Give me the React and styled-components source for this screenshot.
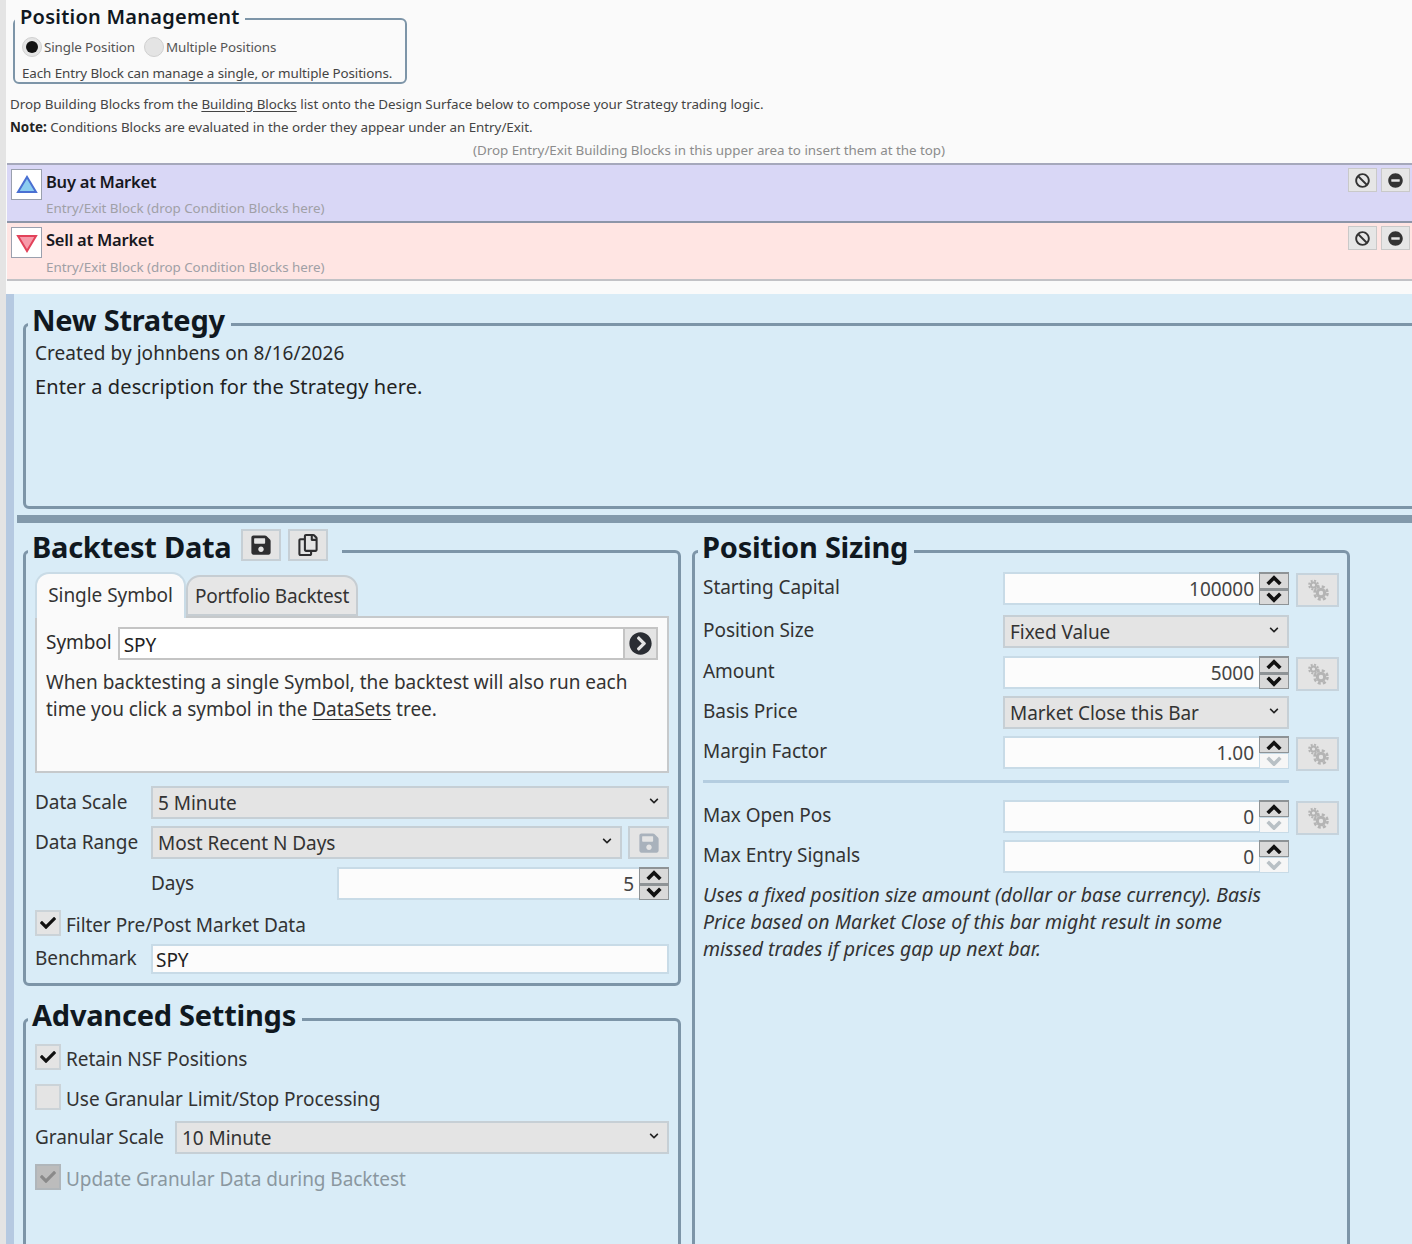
import { Fragment } from "react";
import styled, { createGlobalStyle } from "styled-components";
import {
  FaBan,
  FaCheck,
  FaChevronCircleRight,
  FaChevronDown,
  FaMinusCircle,
  FaRegCopy,
  FaSave,
} from "react-icons/fa";

const GlobalStyle = createGlobalStyle`
  html, body {
    margin: 0;
    padding: 0;
    background: #e4e4e4;
  }
  * {
    box-sizing: border-box;
  }
  body {
    font-family: "Noto Sans", "Open Sans", sans-serif;
    color: #2b2b2b;
  }
`;

const Page = styled.div`
  display: flex;
  width: 1412px;
  height: 1244px;
  overflow: hidden;
  background: #e4e4e4;
`;

const Main = styled.div`
  flex: 1;
  margin-left: 6px;
  min-width: 0;
`;

const TopPanel = styled.div`
  height: 294px;
  background: #fafafa;
  overflow: hidden;
`;

const Frame = styled.fieldset`
  margin: 0;
  padding: 0;
  min-width: 0;
  border: 3px solid #7d95a8;
  border-radius: 6px;
`;

const FrameTitle = styled.legend`
  display: flex;
  align-items: center;
  padding: 0 6px 9px 4px;
  margin-left: -7px;
  height: 34px;
  font-size: 29px;
  font-weight: 700;
  letter-spacing: -0.25px;
  color: #10181f;
  white-space: nowrap;
`;

const SizingTitle = styled(FrameTitle)`
  margin-left: -5px;
`;

const PositionFrame = styled(Frame)`
  width: 394px;
  height: 78px;
  margin: 6px 0 0 7px;
  border-width: 2px;
  padding: 0 7px;
`;

const PositionTitle = styled(FrameTitle)`
  height: 26px;
  margin-left: -7px;
  padding: 0 5px 6px 5px;
  font-size: 20px;
  font-weight: 600;
  letter-spacing: 0.25px;
`;

const RadioRow = styled.div`
  display: flex;
  align-items: center;
  height: 24px;
  margin-top: 3px;
  font-size: 13.4px;
  letter-spacing: -0.1px;
  color: #555;
`;

const RadioDot = styled.span`
  display: flex;
  align-items: center;
  justify-content: center;
  width: 20px;
  height: 20px;
  margin-right: 2px;
  border-radius: 50%;
  background: #e4e4e4;
  border: 1px solid #d0d0d0;
  &::after {
    content: "";
    width: 12px;
    height: 12px;
    border-radius: 50%;
    background: ${(p) => (p.$on ? "#111" : "transparent")};
  }
`;

const RadioLabel = styled.span`
  margin-right: 9px;
`;

const SmallNote = styled.div`
  margin-top: 4px;
  font-size: 13.4px;
  line-height: 20px;
  letter-spacing: -0.1px;
  color: #444;
`;

const HelpLine = styled.div`
  padding-left: 4px;
  font-size: 13.4px;
  line-height: 23px;
  letter-spacing: -0.03px;
  color: #444;
  u {
    text-underline-offset: 2px;
  }
  b {
    color: #222;
  }
`;

const HelpLines = styled.div`
  margin-top: 9px;
`;

const DropHint = styled.div`
  margin: 0 0 1px;
  text-align: center;
  font-size: 13.4px;
  line-height: 23px;
  letter-spacing: -0.03px;
  color: #8c8c8c;
`;

const Block = styled.div`
  display: flex;
  height: ${(p) => (p.$sell ? "60px" : "58px")};
  margin-left: 1px;
  padding: 3px 2px 0 4px;
  background: ${(p) => (p.$sell ? "#ffe5e3" : "#d9d7f6")};
  border-top: 2px solid ${(p) => (p.$sell ? "#8d95a8" : "#a5a8bb")};
  border-bottom: ${(p) => (p.$sell ? "2px solid #c2c2c6" : "0")};
`;

const BlockIcon = styled.div`
  display: flex;
  align-items: center;
  justify-content: center;
  width: 31px;
  height: 31px;
  margin-top: 1px;
  background: #fff;
  border: 1px solid #9aa0ae;
`;

const BlockText = styled.div`
  flex: 1;
  margin-left: 4px;
  padding-top: 2px;
`;

const BlockTitle = styled.div`
  font-size: 16.5px;
  line-height: 24px;
  font-weight: 600;
  letter-spacing: -0.25px;
  color: #17171d;
`;

const BlockSub = styled.div`
  margin-top: ${(p) => (p.$sell ? "5px" : "4px")};
  font-size: 13.4px;
  line-height: 20px;
  letter-spacing: -0.03px;
  color: #a0a0a6;
`;

const BlockButtons = styled.div`
  display: flex;
  gap: 4px;
`;

const BlockButton = styled.div`
  display: flex;
  align-items: center;
  justify-content: center;
  width: 29px;
  height: 24px;
  background: #e6e6e6;
  border: 1px solid #c9c9c9;
  color: #333;
  font-size: 15px;
`;

const StrategyPanel = styled.div`
  height: 950px;
  padding: 13px 0 0 9px;
  background: #d9ecf7;
  border-left: 8px solid #b5c9e1;
`;

const StrategyFrame = styled(Frame)`
  width: 1420px;
  height: 202px;
  padding: 0 9px;
`;

const Created = styled.div`
  margin-top: -2px;
  font-size: 19px;
  line-height: 28px;
  letter-spacing: 0.06px;
`;

const Description = styled.div`
  margin-top: 6px;
  font-size: 20px;
  line-height: 28px;
  letter-spacing: 0.12px;
  color: #222;
`;

const Splitter = styled.div`
  height: 8px;
  margin: 6px 0 0 -6px;
  background: #8299ab;
`;

const Columns = styled.div`
  display: grid;
  grid-template-columns: 658px 658px;
  column-gap: 11px;
  margin-top: 11px;
  height: 740px;
`;

const LeftColumn = styled.div`
  display: flex;
  flex-direction: column;
  gap: 16px;
`;

const BacktestFrame = styled(Frame)`
  height: 452px;
  padding: 0 9px;
`;

const AdvancedFrame = styled(Frame)`
  height: 300px;
  padding: 0 9px;
`;

const SizingFrame = styled(Frame)`
  height: 740px;
  padding: 0 8px;
`;

const TitleButtons = styled.div`
  display: flex;
  gap: 7px;
  margin: 0 8px 3px 9px;
`;

const ToolButton = styled.div`
  display: flex;
  align-items: center;
  justify-content: center;
  width: 40px;
  height: 32px;
  background: #e4e4e4;
  border: 2px solid #c6cfd5;
  color: ${(p) => (p.$off ? "#a9b2bc" : "#2e2e30")};
  font-size: 22px;
`;

const RangeSaveButton = styled(ToolButton)`
  width: 41px;
  height: 33px;
  margin-left: 6px;
`;

const Tabs = styled.div`
  display: flex;
  align-items: flex-end;
  height: 44px;
  margin-top: 4px;
`;

const Tab = styled.div`
  display: flex;
  align-items: center;
  justify-content: center;
  height: ${(p) => (p.$active ? "46px" : "41px")};
  width: ${(p) => (p.$active ? "151px" : "172px")};
  margin-bottom: ${(p) => (p.$active ? "-2px" : "0")};
  padding: ${(p) => (p.$active ? "0 0 3px" : "1px 0 0")};
  position: relative;
  font-size: 19px;
  letter-spacing: ${(p) => (p.$active ? "-0.05px" : "-0.2px")};
  color: #333;
  background: ${(p) => (p.$active ? "#fafafa" : "#e6e6e6")};
  border: 2px solid ${(p) => (p.$active ? "#c9dbe6" : "#c6cdd2")};
  border-bottom: ${(p) => (p.$active ? "0" : "2px solid #c6cdd2")};
  border-radius: 14px 14px 0 0;
`;

const TabPanel = styled.div`
  height: 157px;
  padding: 9px 9px 0 9px;
  background: #fafafa;
  border: 2px solid #c6c9cb;
`;

const SymbolRow = styled.div`
  display: flex;
  align-items: center;
  height: 33px;
  font-size: 19px;
  letter-spacing: -0.05px;
`;

const SymbolLabel = styled.span`
  margin-top: -3px;
`;

const SymbolInput = styled.div`
  flex: 1;
  display: flex;
  align-items: center;
  height: 33px;
  margin-left: 6px;
  padding: 2px 0 0 4px;
  background: #fff;
  border: 2px solid #c4c4c4;
  color: #222;
`;

const GoButton = styled.div`
  display: flex;
  align-items: center;
  justify-content: center;
  width: 33px;
  height: 33px;
  background: #e4e4e4;
  border: 2px solid #c4c4c4;
  border-left: 0;
  color: #2a2d33;
  font-size: 23px;
`;

const Paragraph = styled.div`
  margin-top: 9px;
  font-size: 19px;
  line-height: 27px;
  letter-spacing: -0.03px;
  color: #333;
  u {
    text-underline-offset: 3px;
  }
`;

const FormRow = styled.div`
  display: grid;
  grid-template-columns: ${(p) => p.$columns};
  align-items: center;
  margin-top: ${(p) => p.$top};
`;

const Label = styled.div`
  font-size: 19px;
  line-height: 28px;
  letter-spacing: -0.05px;
  color: #333;
  margin-top: -2px;
`;

const SelectBox = styled.div`
  display: flex;
  align-items: center;
  justify-content: space-between;
  height: 33px;
  padding: 1px 8px 0 5px;
  background: #e4e4e4;
  border: 2px solid #c6cfd5;
  font-size: 19px;
  letter-spacing: -0.05px;
  color: #333;
  svg {
    font-size: 10px;
    color: #222;
    margin-top: -4px;
  }
`;

const Field = styled.div`
  display: flex;
  height: ${(p) => p.$height || "33px"};
  background: #fcfcfc;
  border: 2px solid #c8dbe7;
  font-size: 19px;
  letter-spacing: -0.05px;
  color: ${(p) => (p.$dark ? "#222" : "#444")};
`;

const FieldText = styled.div`
  flex: 1;
  display: flex;
  align-items: center;
  justify-content: ${(p) => (p.$left ? "flex-start" : "flex-end")};
  padding: 1px 5px 0 3px;
`;

const SpinnerWrap = styled.div`
  display: flex;
  flex-direction: column;
  width: 30px;
  margin: -2px -2px -2px 0;
`;

const SpinnerButton = styled.div`
  flex: 1;
  display: flex;
  align-items: center;
  justify-content: center;
  background: ${(p) => (p.$off ? "#f6f6f6" : "#d9d9d9")};
  border: 1px solid ${(p) => (p.$off ? "#c8dbe7" : "#8e9396")};
  border-top-width: ${(p) => (p.$off ? "1px" : "2px")};
  color: ${(p) => (p.$off ? "#b8c0c5" : "#111")};
`;

const GearButton = styled.div`
  display: flex;
  align-items: center;
  justify-content: center;
  width: 43px;
  height: 34px;
  background: #e4e4e4;
  border: 2px solid #c6d3dc;
  color: #b4b4b4;
`;

const CheckRow = styled.div`
  display: flex;
  align-items: center;
  gap: 5px;
  height: 26px;
  margin-top: ${(p) => p.$top};
  font-size: 19px;
  letter-spacing: -0.05px;
  color: ${(p) => (p.$off ? "#8a979f" : "#333")};
`;

const CheckText = styled.span`
  padding-top: 3px;
`;

const CheckBox = styled.div`
  display: flex;
  align-items: center;
  justify-content: center;
  width: 26px;
  height: 26px;
  background: ${(p) => (p.$off ? "#bcbcbc" : "#e4e4e4")};
  border: 2px solid ${(p) => (p.$off ? "#b0b6ba" : "#cbd3d8")};
  color: ${(p) => (p.$off ? "#8a8a8a" : "#111")};
  font-size: 16px;
`;

const SizingGrid = styled.div`
  display: grid;
  grid-template-columns: 300px 286px 7px 43px;
  grid-template-rows: 35px 33px 32px 32px 33px 15px 32px 32px;
  row-gap: 8px;
  margin-top: 4px;
`;

const GearCell = styled.div`
  grid-column: 4;
  margin-top: 1px;
`;

const FirstCell = styled.div`
  grid-column: 1;
  padding-top: 3px;
`;

const FieldCell = styled.div`
  grid-column: 2;
`;

const Divider = styled.div`
  grid-column: 1 / 3;
  height: 3px;
  margin-top: 3px;
  background: #b4cde0;
`;

const SizingNote = styled.div`
  margin-top: 9px;
  font-size: 19.5px;
  font-style: italic;
  line-height: 27px;
  color: #333;
`;

function Chevron({ up, size = 18 }) {
  return (
    <svg width={size} height={size * 0.6} viewBox="0 0 20 12">
      <polyline
        points={up ? "3,10 10,3 17,10" : "3,2 10,9 17,2"}
        fill="none"
        stroke="currentColor"
        strokeWidth="4"
      />
    </svg>
  );
}

// small gear up-left, big gear down-right, like the disabled settings button
function GearsIcon() {
  return (
    <svg width="24" height="24" viewBox="0 0 24 24" fill="none" stroke="currentColor">
      <circle cx="7.5" cy="7" r="2.6" strokeWidth="2" />
      <circle cx="7.5" cy="7" r="4.4" strokeWidth="2" strokeDasharray="2 1.46" />
      <circle cx="15" cy="15" r="3.7" strokeWidth="3" />
      <circle cx="15" cy="15" r="6.5" strokeWidth="2.6" strokeDasharray="3 2.1" />
    </svg>
  );
}

function Spinner({ downOff }) {
  return (
    <SpinnerWrap>
      <SpinnerButton>
        <Chevron up />
      </SpinnerButton>
      <SpinnerButton $off={downOff}>
        <Chevron />
      </SpinnerButton>
    </SpinnerWrap>
  );
}

function NumberField({ value, downOff }) {
  return (
    <Field>
      <FieldText>{value}</FieldText>
      <Spinner downOff={downOff} />
    </Field>
  );
}

function Select({ value }) {
  return (
    <SelectBox>
      {value}
      <FaChevronDown />
    </SelectBox>
  );
}

function Check({ checked, off, top, children }) {
  return (
    <CheckRow $top={top} $off={off}>
      <CheckBox $off={off}>{checked && <FaCheck />}</CheckBox>
      <CheckText>{children}</CheckText>
    </CheckRow>
  );
}

function EntryBlock({ sell, title }) {
  return (
    <Block $sell={sell}>
      <BlockIcon>
        <svg width="22" height="20" viewBox="0 0 22 20">
          <polygon
            points={sell ? "2,3 20,3 11,18" : "2,17 20,17 11,2"}
            fill={sell ? "#f79aaa" : "#8ccdf0"}
            stroke={sell ? "#e2425a" : "#4a70d2"}
            strokeWidth="2"
          />
        </svg>
      </BlockIcon>
      <BlockText>
        <BlockTitle>{title}</BlockTitle>
        <BlockSub $sell={sell}>Entry/Exit Block (drop Condition Blocks here)</BlockSub>
      </BlockText>
      <BlockButtons>
        <BlockButton>
          <FaBan />
        </BlockButton>
        <BlockButton>
          <FaMinusCircle />
        </BlockButton>
      </BlockButtons>
    </Block>
  );
}

const sizingRows = [
  { label: "Starting Capital", value: "100000", gear: true },
  { label: "Position Size", select: "Fixed Value" },
  { label: "Amount", value: "5000", gear: true },
  { label: "Basis Price", select: "Market Close this Bar" },
  { label: "Margin Factor", value: "1.00", downOff: true, gear: true },
  { divider: true },
  { label: "Max Open Pos", value: "0", downOff: true, gear: true },
  { label: "Max Entry Signals", value: "0", downOff: true },
];

const App = () => {
  return (
    <Page>
      <GlobalStyle />
      <Main>
        <TopPanel>
          <PositionFrame>
            <PositionTitle>Position Management</PositionTitle>
            <RadioRow>
              <RadioDot $on />
              <RadioLabel>Single Position</RadioLabel>
              <RadioDot />
              <RadioLabel>Multiple Positions</RadioLabel>
            </RadioRow>
            <SmallNote>Each Entry Block can manage a single, or multiple Positions.</SmallNote>
          </PositionFrame>
          <HelpLines>
            <HelpLine>
              Drop Building Blocks from the <u>Building Blocks</u> list onto the Design Surface
              below to compose your Strategy trading logic.
            </HelpLine>
            <HelpLine>
              <b>Note:</b> Conditions Blocks are evaluated in the order they appear under an
              Entry/Exit.
            </HelpLine>
            <DropHint>(Drop Entry/Exit Building Blocks in this upper area to insert them at the top)</DropHint>
          </HelpLines>
          <EntryBlock title="Buy at Market" />
          <EntryBlock sell title="Sell at Market" />
        </TopPanel>
        <StrategyPanel>
          <StrategyFrame>
            <FrameTitle>New Strategy</FrameTitle>
            <Created>Created by johnbens on 8/16/2026</Created>
            <Description>Enter a description for the Strategy here.</Description>
          </StrategyFrame>
          <Splitter />
          <Columns>
            <LeftColumn>
              <BacktestFrame>
                <FrameTitle>
                  Backtest Data
                  <TitleButtons>
                    <ToolButton>
                      <FaSave />
                    </ToolButton>
                    <ToolButton>
                      <FaRegCopy />
                    </ToolButton>
                  </TitleButtons>
                </FrameTitle>
                <Tabs>
                  <Tab $active>Single Symbol</Tab>
                  <Tab>Portfolio Backtest</Tab>
                </Tabs>
                <TabPanel>
                  <SymbolRow>
                    <SymbolLabel>Symbol</SymbolLabel>
                    <SymbolInput>SPY</SymbolInput>
                    <GoButton>
                      <FaChevronCircleRight />
                    </GoButton>
                  </SymbolRow>
                  <Paragraph>
                    When backtesting a single Symbol, the backtest will also run each
                    <br />
                    time you click a symbol in the <u>DataSets</u> tree.
                  </Paragraph>
                </TabPanel>
                <FormRow $columns="116px 518px" $top="13px">
                  <Label>Data Scale</Label>
                  <Select value="5 Minute" />
                </FormRow>
                <FormRow $columns="116px 471px 47px" $top="7px">
                  <Label>Data Range</Label>
                  <Select value="Most Recent N Days" />
                  <RangeSaveButton $off>
                    <FaSave />
                  </RangeSaveButton>
                </FormRow>
                <FormRow $columns="116px 186px 332px" $top="8px">
                  <span />
                  <Label>Days</Label>
                  <NumberField value="5" />
                </FormRow>
                <Check checked top="10px">
                  Filter Pre/Post Market Data
                </Check>
                <FormRow $columns="116px 518px" $top="8px">
                  <Label>Benchmark</Label>
                  <Field $height="30px" $dark>
                    <FieldText $left>SPY</FieldText>
                  </Field>
                </FormRow>
              </BacktestFrame>
              <AdvancedFrame>
                <FrameTitle>Advanced Settings</FrameTitle>
                <Check checked top="8px">
                  Retain NSF Positions
                </Check>
                <Check top="14px">Use Granular Limit/Stop Processing</Check>
                <FormRow $columns="140px 494px" $top="11px">
                  <Label>Granular Scale</Label>
                  <Select value="10 Minute" />
                </FormRow>
                <Check checked off top="10px">
                  Update Granular Data during Backtest
                </Check>
              </AdvancedFrame>
            </LeftColumn>
            <SizingFrame>
              <SizingTitle>Position Sizing</SizingTitle>
              <SizingGrid>
                {sizingRows.map((row, i) =>
                  row.divider ? (
                    <Divider key={i} />
                  ) : (
                    <Fragment key={i}>
                      <FirstCell>
                        <Label>{row.label}</Label>
                      </FirstCell>
                      <FieldCell>
                        {row.select ? (
                          <Select value={row.select} />
                        ) : (
                          <NumberField value={row.value} downOff={row.downOff} />
                        )}
                      </FieldCell>
                      {row.gear && (
                        <GearCell>
                          <GearButton>
                            <GearsIcon />
                          </GearButton>
                        </GearCell>
                      )}
                    </Fragment>
                  )
                )}
              </SizingGrid>
              <SizingNote>
                Uses a fixed position size amount (dollar or base currency). Basis
                <br />
                Price based on Market Close of this bar might result in some
                <br />
                missed trades if prices gap up next bar.
              </SizingNote>
            </SizingFrame>
          </Columns>
        </StrategyPanel>
      </Main>
    </Page>
  );
};

export default App;
